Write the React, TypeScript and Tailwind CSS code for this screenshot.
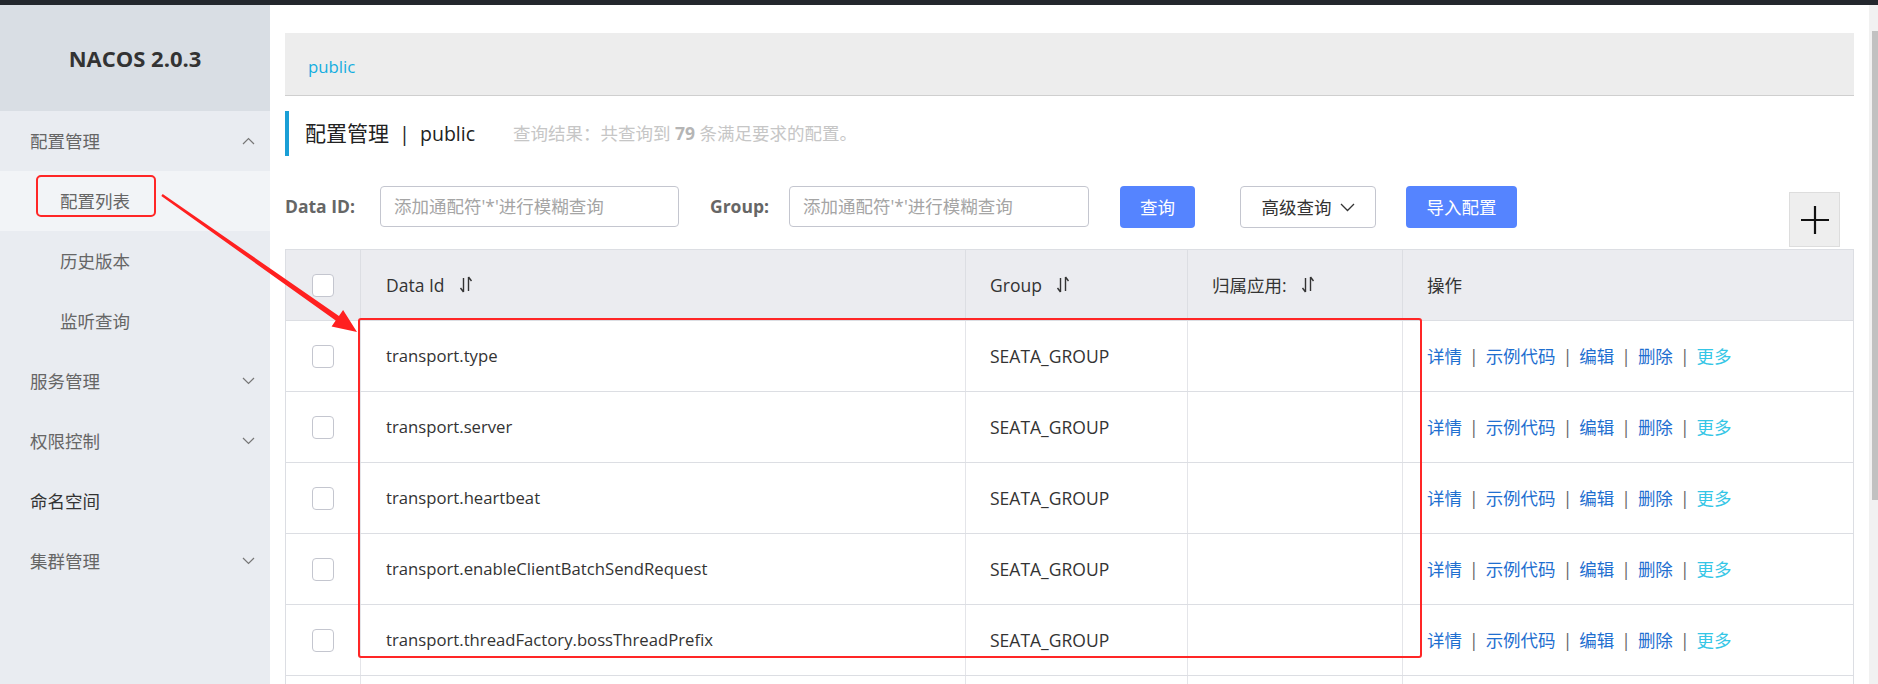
import React from "react";

const rows = [
  "transport.type",
  "transport.server",
  "transport.heartbeat",
  "transport.enableClientBatchSendRequest",
  "transport.threadFactory.bossThreadPrefix",
];

function Chevron({ up }: { up?: boolean }) {
  return (
    <svg width="13" height="8" viewBox="0 0 13 8" fill="none">
      {up ? (
        <path d="M1 7 L6.5 1.5 L12 7" stroke="#777" strokeWidth="1.2" />
      ) : (
        <path d="M1 1 L6.5 6.5 L12 1" stroke="#777" strokeWidth="1.2" />
      )}
    </svg>
  );
}

function SortIcon() {
  return (
    <svg width="14" height="20" viewBox="0 0 14 20" fill="none" className="ml-[14px]">
      <path d="M4.5 3 V17 M4.5 17 L1.5 13" stroke="#333" strokeWidth="1.4" />
      <path d="M9.5 16 V2 M9.5 2 L12.5 6" stroke="#333" strokeWidth="1.4" />
    </svg>
  );
}

function MenuItem({
  label,
  chevron,
  dark,
}: {
  label: string;
  chevron?: "up" | "down";
  dark?: boolean;
}) {
  return (
    <div className="h-[60px] flex items-center justify-between pl-[30px] pr-[15px]">
      <span className={dark ? "text-[#333]" : "text-[#666]"}>{label}</span>
      {chevron && <Chevron up={chevron === "up"} />}
    </div>
  );
}

function SubItem({ label, active }: { label: string; active?: boolean }) {
  return (
    <div
      className={
        "h-[60px] flex items-center pl-[60px] text-[#666] " +
        (active ? "bg-[#f2f4f7]" : "")
      }
    >
      {label}
    </div>
  );
}

function Checkbox() {
  return (
    <div className="w-[22px] h-[23px] rounded-[4px] border border-[#c4c6cf] bg-white" />
  );
}

function Sep() {
  return <span className="mx-[7px] text-[#666]">|</span>;
}

export default function App() {
  return (
    <div className="relative w-[1878px] h-[684px] overflow-hidden bg-white text-[17.5px] font-['Open_Sans','Noto_Sans_CJK_SC',sans-serif]">
      <div className="h-[5px] bg-[#23272d]" />
      <div className="flex h-[679px]">
        {/* Sidebar */}
        <aside className="w-[270px] shrink-0 bg-[#e9ecf1] flex flex-col">
          <div className="h-[106px] bg-[#d9dee4] flex items-center justify-center text-[22px] font-bold text-[#333]">
            NACOS 2.0.3
          </div>
          <MenuItem label="配置管理" chevron="up" />
          <SubItem label="配置列表" active />
          <SubItem label="历史版本" />
          <SubItem label="监听查询" />
          <MenuItem label="服务管理" chevron="down" />
          <MenuItem label="权限控制" chevron="down" />
          <MenuItem label="命名空间" dark />
          <MenuItem label="集群管理" chevron="down" />
        </aside>

        {/* Main */}
        <main className="flex-1 px-[15px]">
          {/* breadcrumb */}
          <div className="mt-[28px] h-[63px] bg-[#ededed] border-b border-[#cfcfcf] flex items-center pl-[23px] pt-[5px]">
            <span className="text-[#14aee0] text-[16.8px]">public</span>
          </div>

          {/* title */}
          <div className="mt-[15px] h-[45px] border-l-[4px] border-[#1a9fd6] pl-[16px] flex items-center">
            <span className="text-[21px] text-[#222]">配置管理</span>
            <span className="text-[20px] text-[#222] mx-[10px]">|</span>
            <span className="text-[19.5px] text-[#222]">public</span>
            <span className="ml-[38px] text-[#c6c6c6]">
              查询结果：共查询到 <b className="text-[#b5b5b5]">79</b> 条满足要求的配置。
            </span>
          </div>

          {/* search row */}
          <div className="mt-[30px] flex items-start">
            <div className="w-[95px] h-[41px] flex items-center font-bold text-[#666]">Data ID:</div>
            <div className="w-[299px] h-[41px] rounded-[4px] border border-[#c4c6cf] flex items-center pl-[13px] text-[#a5a5a5]">
              添加通配符'*'进行模糊查询
            </div>
            <div className="ml-[31px] w-[79px] h-[41px] flex items-center font-bold text-[#666]">Group:</div>
            <div className="w-[300px] h-[41px] rounded-[4px] border border-[#c4c6cf] flex items-center pl-[13px] text-[#a5a5a5]">
              添加通配符'*'进行模糊查询
            </div>
            <div className="ml-[31px] w-[75px] h-[42px] rounded-[4px] bg-[#5584ff] text-white flex items-center justify-center">
              查询
            </div>
            <div className="ml-[45px] w-[136px] h-[42px] rounded-[4px] border border-[#c4c6cf] text-[#333] flex items-center justify-center gap-[8px]">
              <span>高级查询</span>
              <svg width="15" height="9" viewBox="0 0 15 9" fill="none">
                <path d="M1 1 L7.5 7.5 L14 1" stroke="#333" strokeWidth="1.3" />
              </svg>
            </div>
            <div className="ml-[30px] w-[111px] h-[42px] rounded-[4px] bg-[#5584ff] text-white flex items-center justify-center">
              导入配置
            </div>
            <div className="ml-auto mr-[14px] mt-[6px] w-[51px] h-[55px] bg-[#eeeeee] border border-[#dddddd] flex items-center justify-center">
              <svg width="30" height="30" viewBox="0 0 30 30">
                <path d="M15 1 V29 M1 15 H29" stroke="#111" strokeWidth="2.2" />
              </svg>
            </div>
          </div>

          {/* table */}
          <div className="mt-[2px] border-t border-l border-r border-[#dcdee3]">
            <div className="flex h-[71px] bg-[#ebecf0] border-b border-[#dcdee3] text-[#333]">
              <div className="w-[75px] border-r border-[#dcdee3] flex items-center justify-center">
                <Checkbox />
              </div>
              <div className="w-[605px] border-r border-[#dcdee3] flex items-center pl-[25px]">
                Data Id
                <SortIcon />
              </div>
              <div className="w-[222px] border-r border-[#dcdee3] flex items-center pl-[24px]">
                Group
                <SortIcon />
              </div>
              <div className="w-[215px] border-r border-[#dcdee3] flex items-center pl-[24px]">
                归属应用:
                <SortIcon />
              </div>
              <div className="flex-1 flex items-center pl-[24px]">操作</div>
            </div>
            {rows.map((r) => (
              <div key={r} className="flex h-[71px] border-b border-[#dcdee3] text-[#333]">
                <div className="w-[75px] border-r border-[#e4e5e9] flex items-center justify-center">
                  <Checkbox />
                </div>
                <div className="w-[605px] border-r border-[#e4e5e9] flex items-center pl-[25px] text-[16.7px]">{r}</div>
                <div className="w-[222px] border-r border-[#e4e5e9] flex items-center pl-[24px]">SEATA_GROUP</div>
                <div className="w-[215px] border-r border-[#e4e5e9]" />
                <div className="flex-1 flex items-center pl-[24px]">
                  <span className="text-[#1f6fd0]">详情</span>
                  <Sep />
                  <span className="text-[#1f6fd0]">示例代码</span>
                  <Sep />
                  <span className="text-[#1f6fd0]">编辑</span>
                  <Sep />
                  <span className="text-[#1f6fd0]">删除</span>
                  <Sep />
                  <span className="text-[#35c6e6]">更多</span>
                </div>
              </div>
            ))}
            <div className="flex h-[71px] border-b border-[#dcdee3]">
              <div className="w-[75px] border-r border-[#e4e5e9]" />
              <div className="w-[605px] border-r border-[#e4e5e9]" />
              <div className="w-[222px] border-r border-[#e4e5e9]" />
              <div className="w-[215px] border-r border-[#e4e5e9]" />
              <div className="flex-1" />
            </div>
          </div>
        </main>

        {/* scrollbar */}
        <div className="relative w-[9px] shrink-0 bg-[#f1f1f1]">
          <div className="absolute left-[3px] top-[26px] w-[6px] h-[469px] bg-[#c1c1c1]" />
        </div>
      </div>

      {/* annotations */}
      <div className="absolute left-[36px] top-[175px] w-[120px] h-[42px] border-2 border-[#ff2626] rounded-[5px] pointer-events-none" />
      <div className="absolute left-[358px] top-[318px] w-[1064px] h-[340px] border-2 border-[#ff2626] rounded-[3px] pointer-events-none" />
      <svg className="absolute left-0 top-0 pointer-events-none" width="1878" height="684">
        <polygon
          points="162.7,194.0 338.95,315.9 343.1,310.0 357,332 331.6,326.4 335.7,320.5 161.3,196.0"
          fill="#ff2020"
        />
      </svg>
    </div>
  );
}
